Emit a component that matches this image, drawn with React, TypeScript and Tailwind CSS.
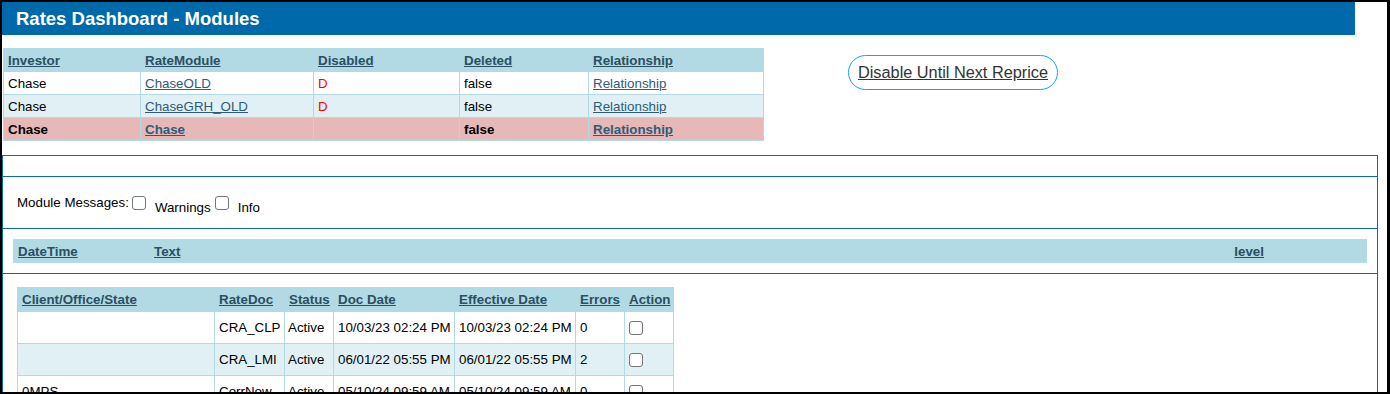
import React from "react";

const F = { fontFamily: '"Liberation Sans", Arial, sans-serif' };

const th = "text-left font-bold px-[4px] h-[23px] align-middle border border-[#b2dae4]";
const hl = "underline text-[#2b4f63]";
const td = "px-[4px] h-[23px] align-middle border border-[#b2dae4]";
const link = "underline text-[#2f5b78]";

function Cb({ className = "" }: { className?: string }) {
  return (
    <input
      type="checkbox"
      className={"appearance-none w-[14px] h-[14px] rounded-[3px] border border-[#767676] bg-white " + className}
    />
  );
}

export default function App() {
  const mods = [
    { inv: "Chase", mod: "ChaseOLD", dis: "D", bg: "bg-white", bold: false },
    { inv: "Chase", mod: "ChaseGRH_OLD", dis: "D", bg: "bg-[#e1f0f5]", bold: false },
    { inv: "Chase", mod: "Chase", dis: "", bg: "bg-[#e6b8b8]", bold: true },
  ];
  const docs = [
    { c: "", r: "CRA_CLP", s: "Active", d: "10/03/23 02:24 PM", e: "10/03/23 02:24 PM", err: "0", bg: "bg-white" },
    { c: "", r: "CRA_LMI", s: "Active", d: "06/01/22 05:55 PM", e: "06/01/22 05:55 PM", err: "2", bg: "bg-[#e1f0f5]" },
    { c: "0MPS", r: "CorrNow", s: "Active", d: "05/10/24 09:59 AM", e: "05/10/24 09:59 AM", err: "0", bg: "bg-white" },
  ];
  return (
    <div
      style={F}
      className="w-[1390px] h-[394px] overflow-hidden bg-white border-t-2 border-l-2 border-r-[3px] border-b-2 border-black text-[13.33px] leading-[15px] text-black"
    >
      <div className="w-[1353px] h-[33px] bg-[#0069aa] text-white font-bold text-[18.5px] leading-[33px] pl-[14px]">
        Rates Dashboard - Modules
      </div>

      <div className="flex items-start mt-[13px]">
        <table className="ml-[1px] border-collapse table-fixed w-[760px]">
          <colgroup>
            <col className="w-[137px]" />
            <col className="w-[173px]" />
            <col className="w-[146px]" />
            <col className="w-[129px]" />
            <col className="w-[175px]" />
          </colgroup>
          <thead>
            <tr className="bg-[#b2dae4]">
              <th className={th}><span className={hl}>Investor</span></th>
              <th className={th}><span className={hl}>RateModule</span></th>
              <th className={th}><span className={hl}>Disabled</span></th>
              <th className={th}><span className={hl}>Deleted</span></th>
              <th className={th}><span className={hl}>Relationship</span></th>
            </tr>
          </thead>
          <tbody>
            {mods.map((m, i) => (
              <tr key={i} className={m.bg + (m.bold ? " font-bold" : "")}>
                <td className={td}>{m.inv}</td>
                <td className={td}><span className={link}>{m.mod}</span></td>
                <td className={td}><span className="text-[#ff0000]">{m.dis}</span></td>
                <td className={td}>false</td>
                <td className={td}><span className={link}>Relationship</span></td>
              </tr>
            ))}
          </tbody>
        </table>
        <div className="ml-[84px] mt-[7px] h-[35px] px-[9px] flex items-center rounded-full border border-[#14a7da] text-[16.3px] text-[#333] underline">
          Disable Until Next Reprice
        </div>
      </div>

      <div className="mt-[14px] w-[1376px] border border-[#0a69a6]">
        <div className="h-[20px]" />
        <div className="h-[52px] border-t border-[#0a69a6] flex items-start pl-[14px]">
          <span className="mt-[18px]">Module Messages:</span>
          <Cb className="mt-[19px] ml-[3px]" />
          <span className="mt-[23px] ml-[9px]">Warnings</span>
          <Cb className="mt-[19px] ml-[4px]" />
          <span className="mt-[23px] ml-[9px]">Info</span>
        </div>
        <div className="border-t border-[#0a69a6] pt-[10px] pb-[10px] pl-[10px] pr-[10px]">
          <div className="h-[24px] bg-[#b2dae4] flex items-center font-bold">
            <span className={"ml-[5px] w-[136px] " + hl}>DateTime</span>
            <span className={hl}>Text</span>
            <span className={"ml-auto mr-[103px] " + hl}>level</span>
          </div>
        </div>
        <div className="border-t border-[#0a69a6] pt-[13px] pl-[14px]">
          <table className="border-collapse table-fixed w-[656px]">
            <colgroup>
              <col className="w-[197px]" />
              <col className="w-[70px]" />
              <col className="w-[49px]" />
              <col className="w-[121px]" />
              <col className="w-[121px]" />
              <col className="w-[49px]" />
              <col className="w-[49px]" />
            </colgroup>
            <thead>
              <tr className="bg-[#b2dae4]">
                {["Client/Office/State", "RateDoc", "Status", "Doc Date", "Effective Date", "Errors", "Action"].map((h) => (
                  <th key={h} className={th + " h-[24px] whitespace-nowrap"}><span className={hl}>{h}</span></th>
                ))}
              </tr>
            </thead>
            <tbody>
              {docs.map((d, i) => (
                <tr key={i} className={d.bg}>
                  <td className="px-[4px] h-[32px] border border-[#b2dae4]">{d.c}</td>
                  <td className="px-[4px] h-[32px] border border-[#b2dae4] whitespace-nowrap">{d.r}</td>
                  <td className="px-[3px] h-[32px] border border-[#b2dae4] whitespace-nowrap">{d.s}</td>
                  <td className="px-[4px] h-[32px] border border-[#b2dae4] whitespace-nowrap">{d.d}</td>
                  <td className="px-[4px] h-[32px] border border-[#b2dae4] whitespace-nowrap">{d.e}</td>
                  <td className="px-[4px] h-[32px] border border-[#b2dae4]">{d.err}</td>
                  <td className="px-[4px] h-[32px] border border-[#b2dae4]">
                    <Cb className="block" />
                  </td>
                </tr>
              ))}
            </tbody>
          </table>
        </div>
      </div>
    </div>
  );
}
